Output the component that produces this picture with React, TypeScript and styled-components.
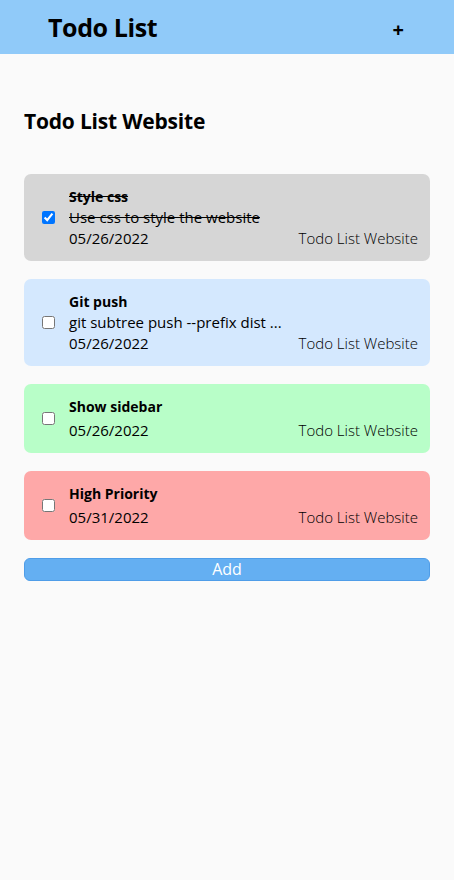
import React from "react";
import styled, { createGlobalStyle } from "styled-components";

type Todo = {
  id: number;
  title: string;
  desc?: string;
  date: string;
  project: string;
  done: boolean;
  tone: "done" | "low" | "medium" | "high";
};

const todos: Todo[] = [
  {
    id: 1,
    title: "Style css",
    desc: "Use css to style the website",
    date: "05/26/2022",
    project: "Todo List Website",
    done: true,
    tone: "done",
  },
  {
    id: 2,
    title: "Git push",
    desc: "git subtree push --prefix dist ...",
    date: "05/26/2022",
    project: "Todo List Website",
    done: false,
    tone: "low",
  },
  {
    id: 3,
    title: "Show sidebar",
    date: "05/26/2022",
    project: "Todo List Website",
    done: false,
    tone: "medium",
  },
  {
    id: 4,
    title: "High Priority",
    date: "05/31/2022",
    project: "Todo List Website",
    done: false,
    tone: "high",
  },
];

const toneColors = {
  done: "#d6d6d6",
  low: "#d4e8fe",
  medium: "#b8fec8",
  high: "#fea8a8",
};

const App = () => {
  return (
    <>
      <GlobalStyle />
      <Header>
        <HeaderTitle>Todo List</HeaderTitle>
        <PlusButton>+</PlusButton>
      </Header>
      <Main>
        <ProjectTitle>Todo List Website</ProjectTitle>
        <TodoList>
          {todos.map((todo) => (
            <TodoCard key={todo.id} $tone={todo.tone}>
              <Check type="checkbox" defaultChecked={todo.done} />
              <TodoBody $done={todo.done}>
                <TodoTitle>{todo.title}</TodoTitle>
                {todo.desc && <TodoDesc>{todo.desc}</TodoDesc>}
                <TodoFooter $gap={!todo.desc}>
                  <TodoDate>{todo.date}</TodoDate>
                  <TodoProject>{todo.project}</TodoProject>
                </TodoFooter>
              </TodoBody>
            </TodoCard>
          ))}
        </TodoList>
        <AddButton>Add</AddButton>
      </Main>
    </>
  );
};

const GlobalStyle = createGlobalStyle`
  html, body {
    margin: 0;
    padding: 0;
    background: #fafafa;
    font-family: "Open Sans", "Noto Sans", sans-serif;
    color: #000;
  }
`;

const Header = styled.header`
  display: flex;
  align-items: center;
  justify-content: space-between;
  height: 54px;
  padding: 0 50px 0 48px;
  background: #90caf9;
`;

const HeaderTitle = styled.h1`
  margin: 0;
  font-size: 25px;
  font-weight: 700;
  letter-spacing: -0.4px;
`;

const PlusButton = styled.span`
  font-size: 20px;
  font-weight: 700;
  margin-top: 4px;
`;

const Main = styled.main`
  display: flex;
  flex-direction: column;
  padding: 52px 24px 0;
`;

const ProjectTitle = styled.h2`
  margin: 0 0 38px;
  font-size: 21px;
  font-weight: 700;
  line-height: 30px;
  letter-spacing: -0.2px;
`;

const TodoList = styled.div`
  display: flex;
  flex-direction: column;
  gap: 18px;
`;

const TodoCard = styled.div<{ $tone: Todo["tone"] }>`
  display: flex;
  align-items: center;
  padding: 12px 12px 12px 17px;
  border-radius: 7px;
  background: ${(p) => toneColors[p.$tone]};
`;

const Check = styled.input`
  width: 13px;
  height: 13px;
  margin: 0 14px 0 1px;
`;

const TodoBody = styled.div<{ $done: boolean }>`
  display: flex;
  flex-direction: column;
  flex: 1;
  font-size: 15px;
  line-height: 21px;

  > div:nth-child(-n + 2) {
    text-decoration: ${(p) => (p.$done ? "line-through" : "none")};
  }
`;

const TodoTitle = styled.div`
  font-size: 14px;
  font-weight: 700;
`;

const TodoDesc = styled.div``;

const TodoFooter = styled.div<{ $gap: boolean }>`
  display: flex;
  justify-content: space-between;
  margin-top: ${(p) => (p.$gap ? "3px" : "0")};
`;

const TodoDate = styled.span``;

const TodoProject = styled.span`
  font-weight: 300;
  color: #000;
`;

const AddButton = styled.button`
  margin-top: 18px;
  height: 23px;
  padding: 0;
  border: 1px solid #4f9de8;
  border-radius: 6px;
  background: #64aff2;
  color: #fff;
  font-family: "Open Sans", "Noto Sans", sans-serif;
  font-size: 16px;
  line-height: 21px;
`;

export default App;
